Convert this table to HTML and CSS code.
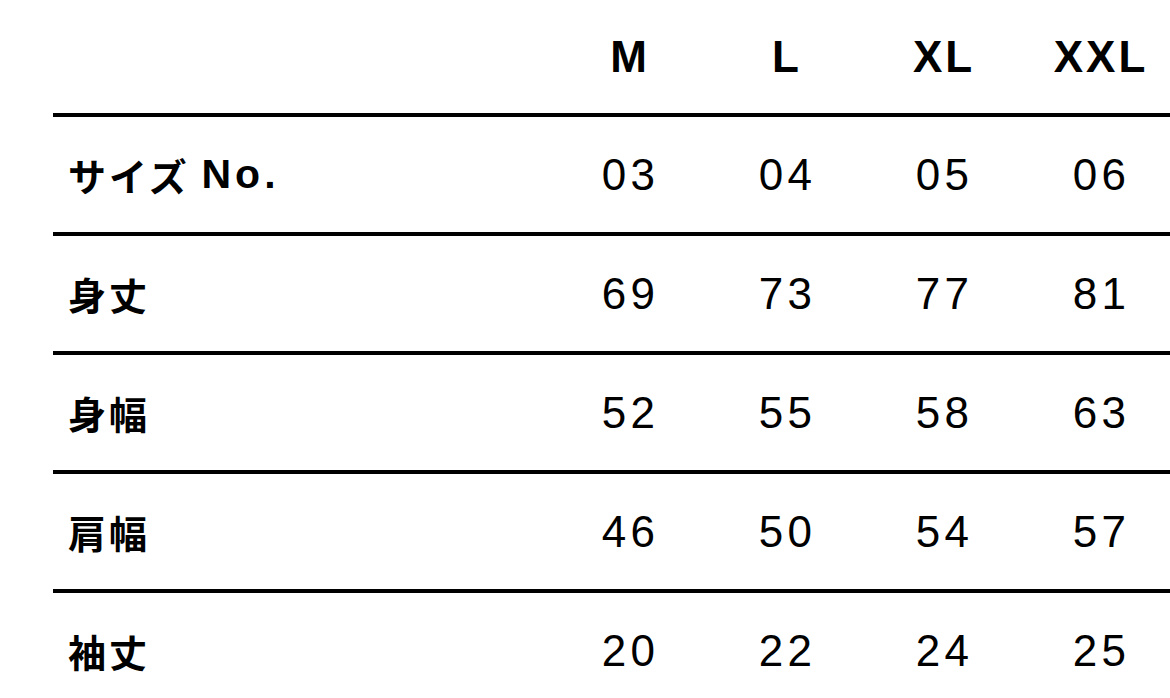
FILE: index.html
```html
<!DOCTYPE html>
<html lang="ja">
<head>
<meta charset="utf-8">
<title>サイズ表</title>
<link rel="stylesheet" href="styles.css">
</head>
<body>
<div class="size-table">
  <div class="row head">
    <div class="label"></div>
    <div class="cell">M</div>
    <div class="cell">L</div>
    <div class="cell">XL</div>
    <div class="cell">XXL</div>
  </div>
  <div class="row">
    <div class="label">サイズ <span class="latin">No.</span></div>
    <div class="cell">03</div>
    <div class="cell">04</div>
    <div class="cell">05</div>
    <div class="cell">06</div>
  </div>
  <div class="row">
    <div class="label">身丈</div>
    <div class="cell">69</div>
    <div class="cell">73</div>
    <div class="cell">77</div>
    <div class="cell">81</div>
  </div>
  <div class="row">
    <div class="label">身幅</div>
    <div class="cell">52</div>
    <div class="cell">55</div>
    <div class="cell">58</div>
    <div class="cell">63</div>
  </div>
  <div class="row">
    <div class="label">肩幅</div>
    <div class="cell">46</div>
    <div class="cell">50</div>
    <div class="cell">54</div>
    <div class="cell">57</div>
  </div>
  <div class="row last">
    <div class="label">袖丈</div>
    <div class="cell">20</div>
    <div class="cell">22</div>
    <div class="cell">24</div>
    <div class="cell">25</div>
  </div>
</div>
</body>
</html>
```

FILE: styles.css
```css
html, body {
  margin: 0;
  padding: 0;
  background: #fff;
  overflow: hidden;
}

body {
  font-family: "Liberation Sans", "Noto Sans CJK JP", sans-serif;
  color: #000;
}

.size-table {
  margin-left: 53px;
  width: 1125px;
}

.row {
  display: grid;
  grid-template-columns: 497px 157px 157px 157px 157px;
  height: 115px;
  border-bottom: 4px solid #000;
}

.row.head {
  height: 113px;
}

.row.last {
  border-bottom: none;
}

.cell {
  display: flex;
  align-items: center;
  justify-content: center;
  padding-left: 4px;
  font-size: 44px;
  letter-spacing: 0.1em;
  font-weight: 400;
}

.head .cell {
  font-weight: 700;
  letter-spacing: 3px;
  padding-left: 3px;
}

.label {
  display: flex;
  align-items: center;
  padding-left: 15px;
  font-family: "Noto Sans CJK JP", sans-serif;
  font-weight: 700;
  font-size: 38px;
  letter-spacing: 3px;
  white-space: pre;
}

.label .latin {
  font-family: "Liberation Sans", sans-serif;
  font-size: 41px;
  letter-spacing: 4px;
}
```
